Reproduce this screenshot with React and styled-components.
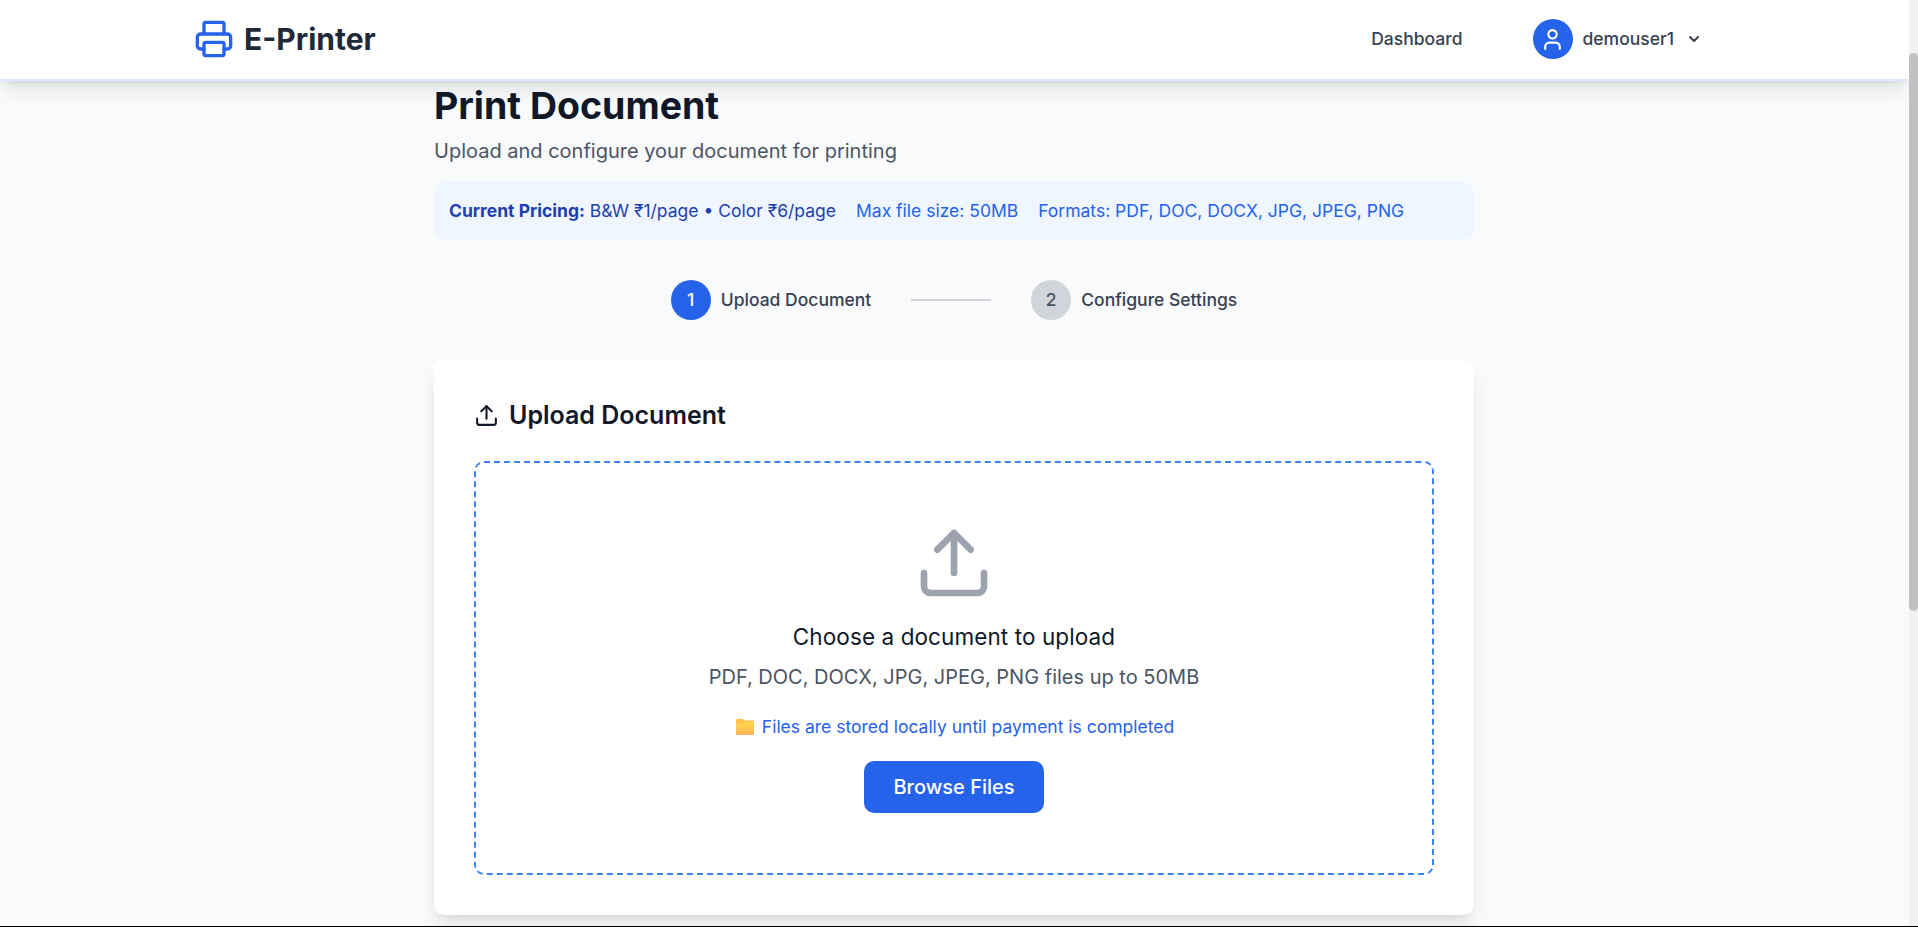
import React from 'react';
import styled, { createGlobalStyle } from 'styled-components';
import { ChevronDown } from 'lucide-react';

const GlobalStyle = createGlobalStyle`
  *, *::before, *::after { box-sizing: border-box; }
  body {
    margin: 0;
    font-family: Inter, "Liberation Sans", sans-serif;
    background: #f9fafb;
  }
  h1, h2, p { margin: 0; }
`;

const Shell = styled.div`
  display: grid;
  grid-template-columns: minmax(0, 1fr) 9px;
  height: 927px;
  overflow: hidden;
  border-bottom: 1px solid #000;
`;

const Viewport = styled.div`
  display: flex;
  flex-direction: column;
  min-width: 0;
  height: 926px;
  overflow: hidden;
  background: #f9fafc;
`;

const Header = styled.header`
  position: relative;
  z-index: 1;
  flex: none;
  height: 81px;
  padding-right: 1px;
  background: #fff;
  border-bottom: 2px solid #dbeafe;
  box-shadow: 0 12.5px 18.75px -3.75px rgba(0, 0, 0, 0.1), 0 5px 7.5px -5px rgba(0, 0, 0, 0.1);
`;

const HeaderInner = styled.div`
  display: flex;
  align-items: center;
  justify-content: space-between;
  width: 1600px;
  height: 78px;
  margin: 0 auto;
  padding: 0 40px;
`;

const Brand = styled.div`
  display: flex;
  align-items: center;
  gap: 10px;
  color: #1f2937;
  font-size: 30px;
  font-weight: 700;
  line-height: 40px;
  svg { color: #2563eb; }
`;

const Nav = styled.nav`
  display: flex;
  align-items: center;
  gap: 70px;
  color: #374151;
  font-size: 17.5px;
  font-weight: 500;
  line-height: 25px;
`;

const NavLabel = styled.span`
  padding-bottom: 1px;
`;

const UserMenu = styled.div`
  display: flex;
  align-items: center;
  gap: 10px;
  padding-right: 10px;
`;

const Chevron = styled(ChevronDown)`
  margin: 0 2px;
`;

const Avatar = styled.span`
  display: grid;
  place-items: center;
  width: 40px;
  height: 40px;
  border-radius: 50%;
  background: #2563eb;
  color: #fff;
`;

const Main = styled.main`
  flex: none;
  align-self: center;
  width: 1041px;
  padding: 2px 1px 0 0;
`;

const Title = styled.h1`
  color: #111827;
  font-size: 37.5px;
  font-weight: 700;
  line-height: 45px;
`;

const Subtitle = styled.p`
  margin-top: 8px;
  color: #4b5563;
  font-size: 20px;
  line-height: 30px;
`;

const Pricing = styled.div`
  display: flex;
  align-items: center;
  gap: 20px;
  height: 58px;
  margin-top: 16px;
  padding: 0 15px 2px;
  border-radius: 10px;
  background: #eff6ff;
  color: #2563eb;
  font-size: 17.5px;
  line-height: 25px;
`;

const Rates = styled.span`
  color: #1e40af;
`;

const Steps = styled.div`
  display: flex;
  align-items: center;
  justify-content: center;
  gap: 40px;
  margin: 40px 0;
`;

const Step = styled.div`
  display: flex;
  align-items: center;
  gap: 10px;
  color: #374151;
  font-size: 17.5px;
  font-weight: 500;
  line-height: 25px;
`;

const StepNumber = styled.span`
  display: grid;
  place-items: center;
  width: 40px;
  height: 40px;
  padding-bottom: 1px;
  border-radius: 50%;
  background: ${(p) => (p.$active ? '#2563eb' : '#d1d5db')};
  color: ${(p) => (p.$active ? '#fff' : '#4b5563')};
`;

const StepLabel = styled.span`
  padding-bottom: 1px;
`;

const StepLine = styled.span`
  width: 80px;
  height: 2px;
  background: #d1d5db;
`;

const Card = styled.section`
  height: 555px;
  padding: 40px;
  border-radius: 10px;
  background: #fff;
  box-shadow: 0 12.5px 18.75px -3.75px rgba(0, 0, 0, 0.1), 0 5px 7.5px -5px rgba(0, 0, 0, 0.1);
`;

const CardTitle = styled.h2`
  display: flex;
  align-items: center;
  gap: 10px;
  color: #111827;
  font-size: 25px;
  font-weight: 600;
  line-height: 31px;
`;

const DropZone = styled.div`
  display: flex;
  flex-direction: column;
  align-items: center;
  height: 414px;
  margin-top: 30px;
  padding-top: 59.5px;
  border: 2px dashed #3b82f6;
  border-radius: 10px;
  svg { flex: none; }
`;

const Prompt = styled.p`
  margin-top: 16px;
  color: #111827;
  font-size: 22.5px;
  line-height: 35px;
  letter-spacing: 0.09px;
`;

const Hint = styled.p`
  margin-top: 8.5px;
  color: #4b5563;
  font-size: 20px;
  line-height: 30px;
`;

const StorageNote = styled.p`
  display: flex;
  align-items: center;
  gap: 8px;
  margin-top: 22px;
  padding-left: 2px;
  color: #2563eb;
  font-size: 17.5px;
  line-height: 25px;
`;

const BrowseButton = styled.button`
  height: 52px;
  width: 180px;
  margin-top: 22px;
  padding: 0;
  border: 0;
  border-radius: 10px;
  background: #2563eb;
  color: #fff;
  font: 500 20px/30px Inter, "Liberation Sans", sans-serif;
`;

const ScrollTrack = styled.div`
  height: 926px;
  padding-top: 53px;
  background: #f1f1f1;
`;

const ScrollThumb = styled.div`
  height: 558px;
  border-radius: 5px;
  background: #c1c1c1;
`;

const stroke = {
  viewBox: '0 0 24 24',
  fill: 'none',
  stroke: 'currentColor',
  strokeWidth: 2,
  strokeLinecap: 'round',
  strokeLinejoin: 'round',
};

const UploadIcon = ({ size, color }) => (
  <svg {...stroke} width={size} height={size} color={color}>
    <path d="M21 15v4a2 2 0 0 1-2 2H5a2 2 0 0 1-2-2v-4" />
    <polyline points="17 8 12 3 7 8" />
    <line x1="12" x2="12" y1="3" y2="15" />
  </svg>
);

const PrinterIcon = () => (
  <svg {...stroke} width="40" height="40">
    <path d="M6 18H4a2 2 0 0 1-2-2v-5a2 2 0 0 1 2-2h16a2 2 0 0 1 2 2v5a2 2 0 0 1-2 2h-2" />
    <path d="M6 9V3a1 1 0 0 1 1-1h10a1 1 0 0 1 1 1v6" />
    <rect x="6" y="14" width="12" height="8" rx="1" />
  </svg>
);

const UserIcon = () => (
  <svg {...stroke} width="25" height="25">
    <path d="M19 21v-2a4 4 0 0 0-4-4H9a4 4 0 0 0-4 4v2" />
    <circle cx="12" cy="7" r="4" />
  </svg>
);

const FolderIcon = () => (
  <svg width="18" height="16" viewBox="0 0 18 16">
    <defs>
      <linearGradient id="folderFront" x1="0" y1="0" x2="0" y2="1">
        <stop offset="0" stopColor="#ffd84f" />
        <stop offset="1" stopColor="#ffb455" />
      </linearGradient>
    </defs>
    <path d="M0 1.200A1.200 1.200 0 0 1 1.200 0h5.200c.5 0 .9.200 1.200.5L9 1.500h7.800A1.200 1.200 0 0 1 18 2.700V8H0z" fill="#fdbf45" />
    <path d="M0 4.500h6.500c.5 0 .9-.2 1.200-.5l.8-.5c.3-.3.7-.4 1.100-.4h7.200A1.200 1.200 0 0 1 18 4.300V15.200a.8.8 0 0 1-.8.8H.8a.8.8 0 0 1-.8-.8z" fill="url(#folderFront)" />
  </svg>
);

export default function App() {
  return (
    <>
      <GlobalStyle />
      <Shell>
        <Viewport>
          <Header>
            <HeaderInner>
              <Brand><PrinterIcon />E-Printer</Brand>
              <Nav>
                <NavLabel>Dashboard</NavLabel>
                <UserMenu>
                  <Avatar><UserIcon /></Avatar>
                  <NavLabel>demouser1</NavLabel>
                  <Chevron size={16} strokeWidth={3} />
                </UserMenu>
              </Nav>
            </HeaderInner>
          </Header>
          <Main>
            <Title>Print Document</Title>
            <Subtitle>Upload and configure your document for printing</Subtitle>
            <Pricing>
              <Rates><strong>Current Pricing:</strong> B&amp;W ₹1/page • Color ₹6/page</Rates>
              <span>Max file size: 50MB</span>
              <span>Formats: PDF, DOC, DOCX, JPG, JPEG, PNG</span>
            </Pricing>
            <Steps>
              <Step><StepNumber $active>1</StepNumber><StepLabel>Upload Document</StepLabel></Step>
              <StepLine />
              <Step><StepNumber>2</StepNumber><StepLabel>Configure Settings</StepLabel></Step>
            </Steps>
            <Card>
              <CardTitle><UploadIcon size={25} />Upload Document</CardTitle>
              <DropZone>
                <UploadIcon size={80} color="#9ca3af" />
                <Prompt>Choose a document to upload</Prompt>
                <Hint>PDF, DOC, DOCX, JPG, JPEG, PNG files up to 50MB</Hint>
                <StorageNote><FolderIcon />Files are stored locally until payment is completed</StorageNote>
                <BrowseButton>Browse Files</BrowseButton>
              </DropZone>
            </Card>
          </Main>
        </Viewport>
        <ScrollTrack><ScrollThumb /></ScrollTrack>
      </Shell>
    </>
  );
}
